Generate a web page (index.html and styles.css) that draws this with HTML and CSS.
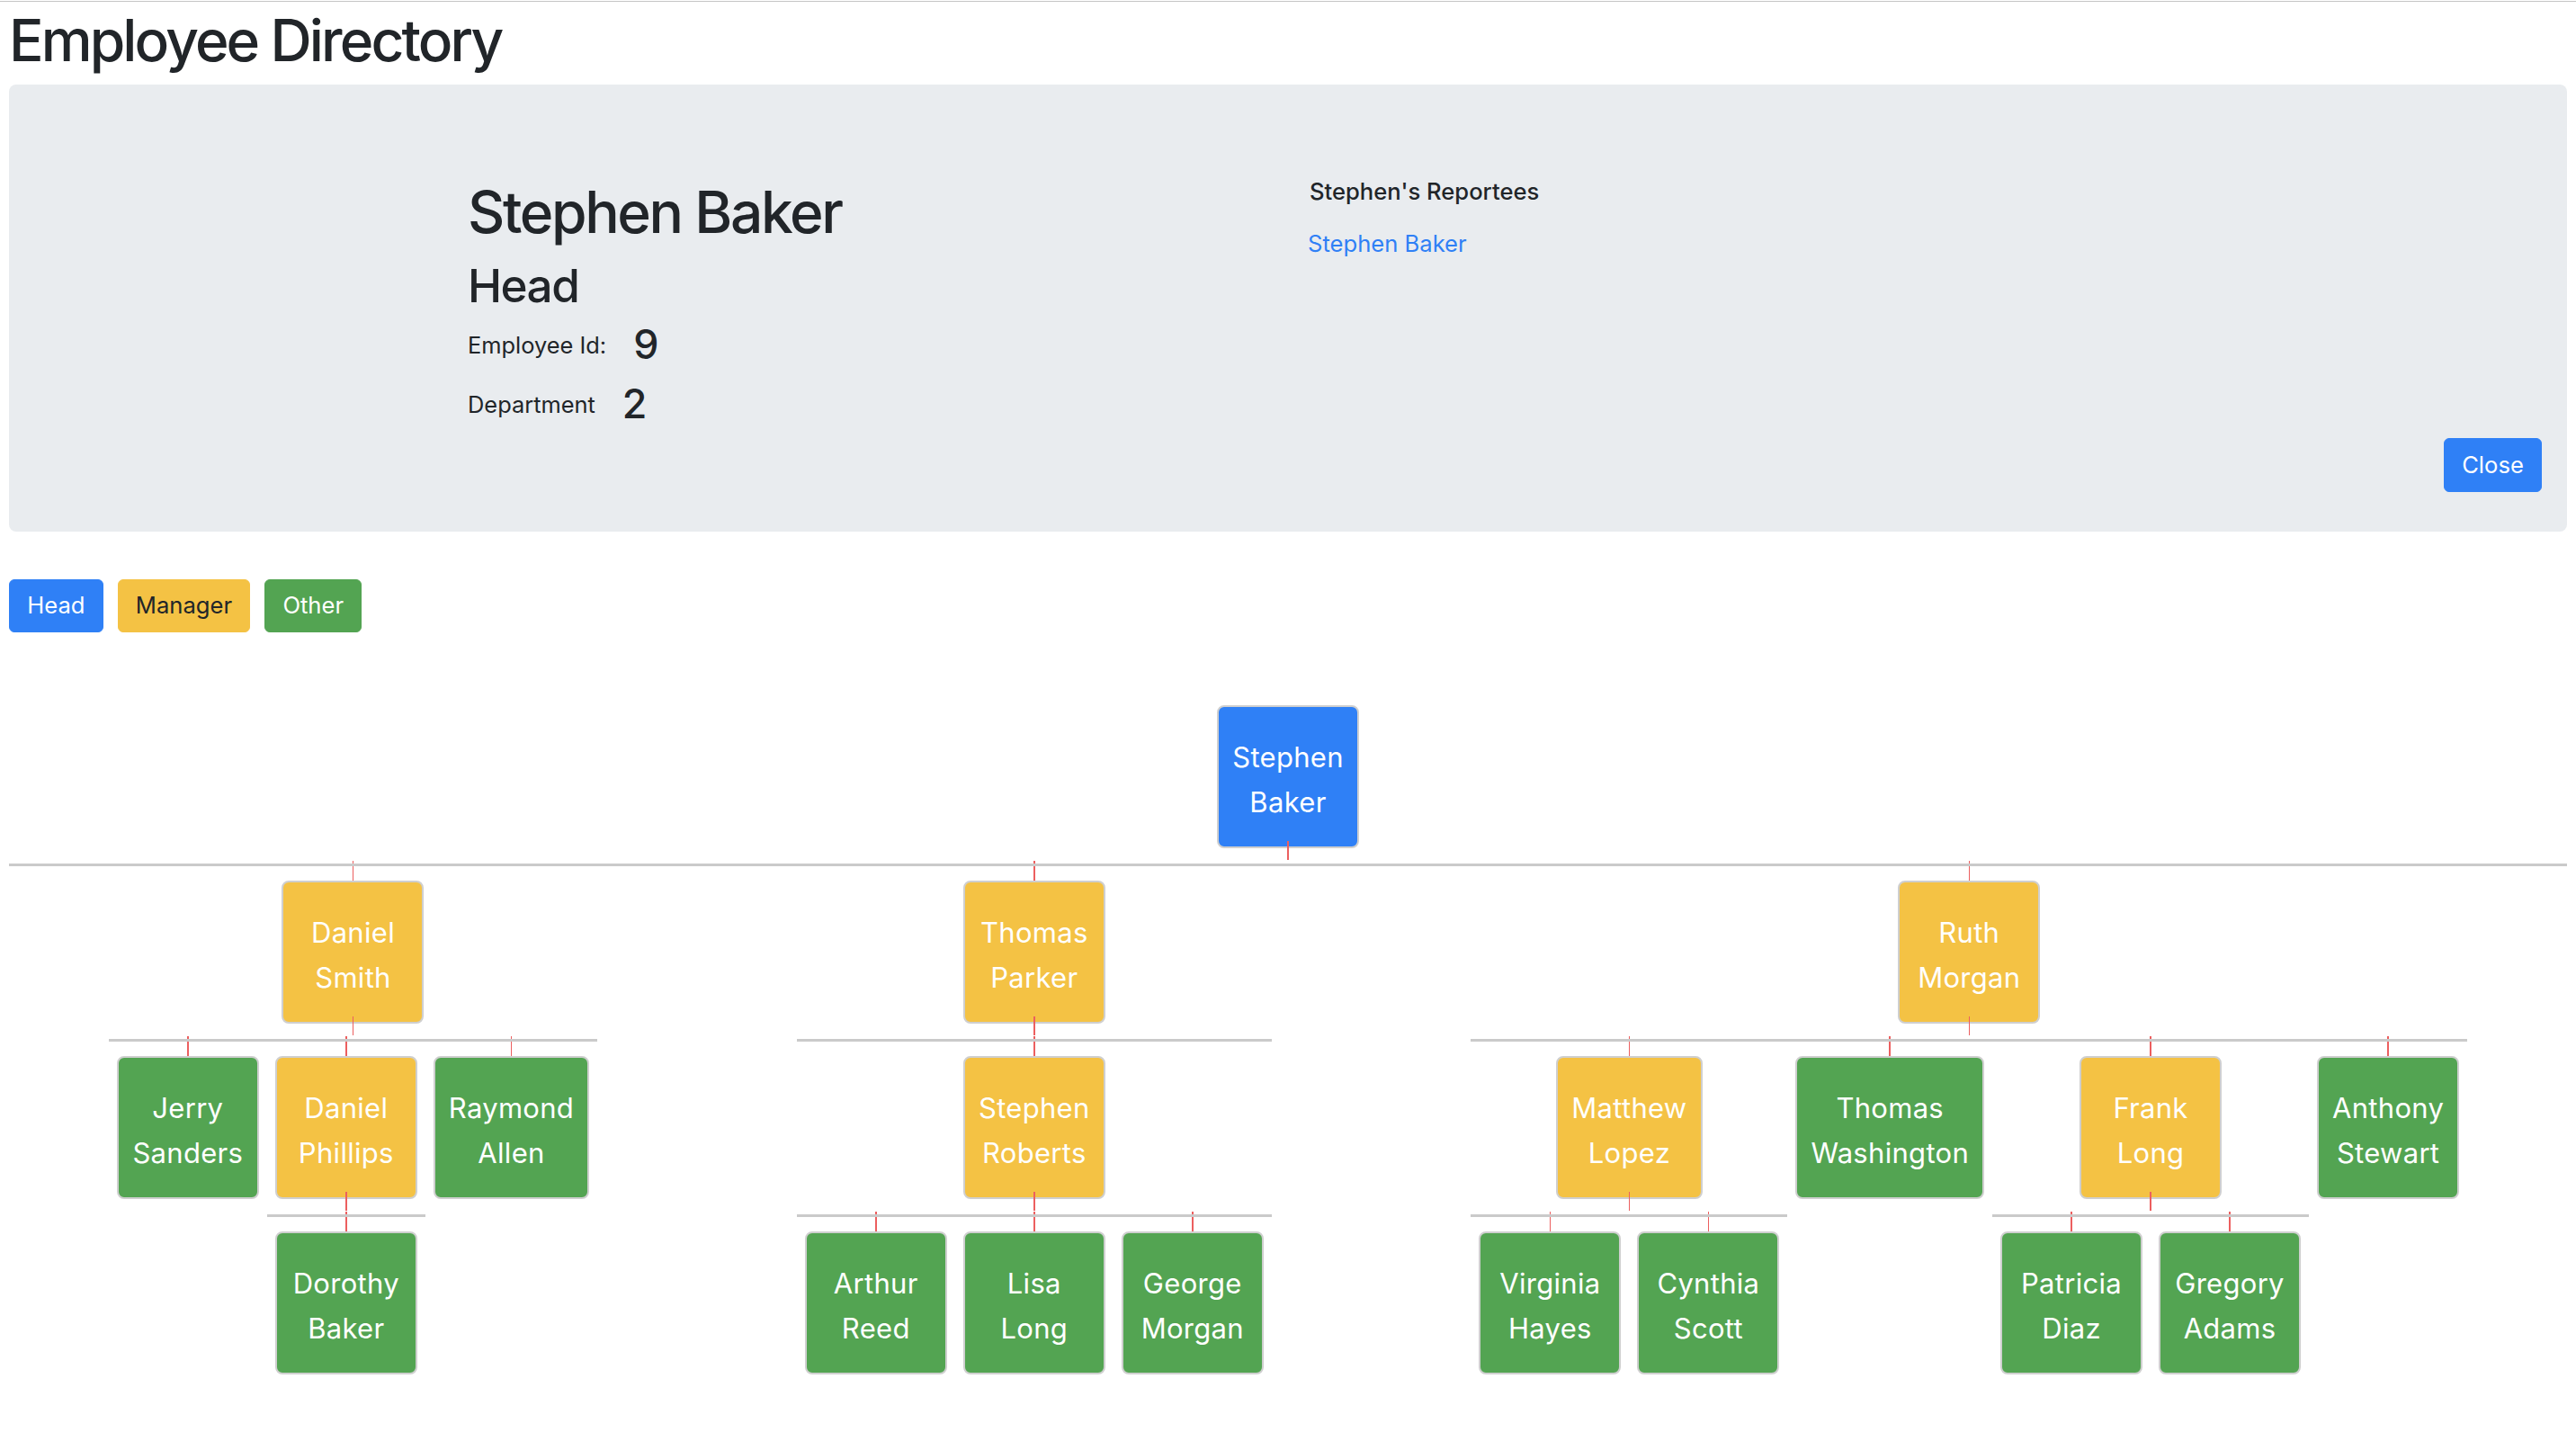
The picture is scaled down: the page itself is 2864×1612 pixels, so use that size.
FILE: index.html
```html
<!DOCTYPE html>
<html lang="en">
<head>
<meta charset="utf-8">
<title>Employee Directory</title>
<link rel="stylesheet" href="styles.css">
</head>
<body>
<div class="page">
  <div class="topline"></div>
  <h1 class="title">Employee Directory</h1>

  <section class="jumbotron">
    <div class="profile-container">
      <div class="profile">
        <h1 class="profile-name">Stephen Baker</h1>
        <h2 class="profile-role">Head</h2>
        <div class="profile-row">
          <span class="profile-label">Employee Id:</span>
          <h3 class="profile-value">9</h3>
        </div>
        <div class="profile-row">
          <span class="profile-label">Department</span>
          <h3 class="profile-value">2</h3>
        </div>
      </div>
      <div class="reportees">
        <h6 class="reportees-title">Stephen's Reportees</h6>
        <a class="reportees-link" href="#">Stephen Baker</a>
      </div>
    </div>
    <div class="jumbotron-actions">
      <button class="btn btn--primary" type="button">Close</button>
    </div>
  </section>

  <div class="legend">
    <span class="btn btn--primary">Head</span>
    <span class="btn btn--warning">Manager</span>
    <span class="btn btn--success">Other</span>
  </div>

  <ul class="tree">
    <li class="member">
      <div class="node node--head has-kids">Stephen Baker</div>
      <ul class="reports reports--top">
        <li class="member">
          <div class="node node--manager has-kids">Daniel Smith</div>
          <ul class="reports">
            <li class="member"><div class="node node--other">Jerry Sanders</div></li>
            <li class="member">
              <div class="node node--manager has-kids">Daniel Phillips</div>
              <ul class="reports">
                <li class="member"><div class="node node--other">Dorothy Baker</div></li>
              </ul>
            </li>
            <li class="member"><div class="node node--other">Raymond Allen</div></li>
          </ul>
        </li>
        <li class="member">
          <div class="node node--manager has-kids">Thomas Parker</div>
          <ul class="reports">
            <li class="member">
              <div class="node node--manager has-kids">Stephen Roberts</div>
              <ul class="reports">
                <li class="member"><div class="node node--other">Arthur Reed</div></li>
                <li class="member"><div class="node node--other">Lisa Long</div></li>
                <li class="member"><div class="node node--other">George Morgan</div></li>
              </ul>
            </li>
          </ul>
        </li>
        <li class="member">
          <div class="node node--manager has-kids">Ruth Morgan</div>
          <ul class="reports">
            <li class="member">
              <div class="node node--manager has-kids">Matthew Lopez</div>
              <ul class="reports">
                <li class="member"><div class="node node--other">Virginia Hayes</div></li>
                <li class="member"><div class="node node--other">Cynthia Scott</div></li>
              </ul>
            </li>
            <li class="member"><div class="node node--other">Thomas Washington</div></li>
            <li class="member">
              <div class="node node--manager has-kids">Frank Long</div>
              <ul class="reports">
                <li class="member"><div class="node node--other">Patricia Diaz</div></li>
                <li class="member"><div class="node node--other">Gregory Adams</div></li>
              </ul>
            </li>
            <li class="member"><div class="node node--other">Anthony Stewart</div></li>
          </ul>
        </li>
      </ul>
    </li>
  </ul>
</div>
</body>
</html>
```

FILE: styles.css
```css
* { box-sizing: border-box; }

html, body {
  margin: 0;
  padding: 0;
  background: #ffffff;
}

body {
  font-family: "Inter", "Noto Sans", "Liberation Sans", sans-serif;
  color: #212529;
  font-size: 25.6px;
  line-height: 1.5;
}

.page {
  padding: 0 10px;
}

.topline {
  height: 2px;
  margin: 0 -10px;
  border-top: 1px solid #ffffff;
  background: #c6c6c6;
}

.title {
  margin: 5px 0 10px 0;
  font-size: 64px;
  font-weight: 500;
  line-height: 1.2;
  letter-spacing: -0.045em;
}

.jumbotron {
  background: #e9ecef;
  border-radius: 8px;
  padding: 104px 28px 44px 28px;
}

.profile-container {
  width: 1824px;
  margin: 0 auto;
  display: grid;
  grid-template-columns: 912px 912px;
}

.profile-name {
  margin: 0 0 12.8px 0;
  font-size: 64px;
  font-weight: 500;
  line-height: 1.2;
  letter-spacing: -0.037em;
}

.profile-role {
  margin: 0 0 8px 0;
  font-size: 51.2px;
  font-weight: 500;
  line-height: 1.2;
  letter-spacing: -0.03em;
}

.profile-row {
  display: flex;
  align-items: center;
  gap: 30px;
  margin-bottom: 12.8px;
}

.profile-label {
  font-size: 25.4px;
  line-height: 36px;
}

.profile-value {
  margin: 0;
  font-size: 44.8px;
  font-weight: 500;
  line-height: 1.2;
}

.reportees {
  padding-left: 24px;
}

.reportees-title {
  margin: 0 0 23px 0;
  font-size: 25.6px;
  font-weight: 500;
  line-height: 1.2;
}

.reportees-link {
  margin-left: -2px;
  color: #2f80f6;
  text-decoration: none;
  font-size: 25.6px;
  line-height: 1.5;
}

.jumbotron-actions {
  display: flex;
  justify-content: flex-end;
  margin-top: -3px;
}

.btn {
  display: inline-block;
  font-family: inherit;
  font-size: 25.6px;
  line-height: 38.4px;
  padding: 9.6px 19.2px;
  border: 1px solid transparent;
  border-radius: 6px;
  font-weight: 400;
  cursor: pointer;
}

.btn--primary {
  background: #2f80f6;
  border-color: #2f80f6;
  color: #ffffff;
}

.btn--warning {
  background: #f4c244;
  border-color: #f4c244;
  color: #212529;
}

.btn--success {
  background: #53a452;
  border-color: #53a452;
  color: #ffffff;
}

.legend {
  display: flex;
  gap: 16px;
  margin-top: 53px;
}

/* ---------- Org chart ---------- */

.tree,
.reports {
  list-style: none;
  margin: 0;
  padding: 0;
}

.tree {
  margin-top: 81px;
}

.member {
  display: flex;
  flex-direction: column;
  align-items: center;
}

.reports {
  position: relative;
  display: flex;
  align-items: flex-start;
  justify-content: space-around;
  padding-top: 36px;
}

.reports--top {
  align-self: stretch;
}

.reports::before {
  content: "";
  position: absolute;
  left: 0;
  right: 0;
  top: 16.5px;
  height: 3.5px;
  background: #cacaca;
  z-index: 1;
}

.node {
  position: relative;
  width: min-content;
  min-width: 158px;
  margin: 0 9px;
  padding: 31px 15px 24px;
  border: 2px solid #cfcfcf;
  border-radius: 8px;
  font-size: 31px;
  line-height: 50px;
  letter-spacing: 0.3px;
  color: #ffffff;
  text-align: center;
}

.node--head { background: #2f80f6; }
.node--manager { background: #f4c244; }
.node--other { background: #53a452; }

.reports .node::before {
  content: "";
  position: absolute;
  left: 50%;
  bottom: calc(100% + 2px);
  width: 1.5px;
  height: 22px;
  margin-left: -0.75px;
  background: #ec5f5f;
}

.node.has-kids::after {
  content: "";
  position: absolute;
  left: 50%;
  top: calc(100% - 6px);
  width: 1.5px;
  height: 21px;
  margin-left: -0.75px;
  background: #ec5f5f;
}
```
